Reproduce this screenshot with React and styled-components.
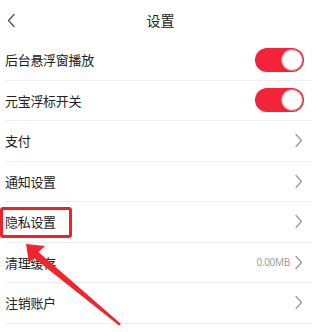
import React from 'react'
import styled, { createGlobalStyle } from 'styled-components'

const Global = createGlobalStyle`
  body {
    margin: 0;
    background: #fff;
    font-family: "Noto Sans CJK SC", "Noto Sans", sans-serif;
  }
`

const rows = [
  { label: '后台悬浮窗播放', type: 'switch' },
  { label: '元宝浮标开关', type: 'switch' },
  { label: '支付' },
  { label: '通知设置' },
  { label: '隐私设置' },
  { label: '清理缓存', value: '0.00MB' },
  { label: '注销账户' },
]

const Chevron = ({ left }) => (
  <svg width="9" height="15" viewBox="0 0 9 15" fill="none">
    {left ? (
      <path d="M7 1.5L1.5 7.5L7 13.5" stroke="#555" strokeWidth="1.4" strokeLinecap="round" strokeLinejoin="round" />
    ) : (
      <path d="M2 1.5L7.5 7.5L2 13.5" stroke="#9a9a9a" strokeWidth="1.3" strokeLinecap="round" strokeLinejoin="round" />
    )}
  </svg>
)

const App = () => {
  return (
    <Page>
      <Global />
      <Header>
        <Back><Chevron left /></Back>
        <Title>设置</Title>
      </Header>
      <List>
        {rows.map(r => (
          <Row key={r.label}>
            <Label>{r.label}</Label>
            <Right>
              {r.type === 'switch' ? (
                <Switch><Knob /></Switch>
              ) : (
                <>
                  {r.value && <Value>{r.value}</Value>}
                  <Chevron />
                </>
              )}
            </Right>
          </Row>
        ))}
      </List>
      <Highlight />
      <Arrow width="319" height="332" viewBox="0 0 319 332">
        <path d="M26 244 L45 246 L38.5 252 L121 324 L119 325.5 L34 258 L29 263 Z" fill="#f0262c" />
      </Arrow>
    </Page>
  )
}

export default App

const Page = styled.div`
  position: relative;
  width: 319px;
  height: 332px;
  overflow: hidden;
  background: #fff;
`

const Header = styled.div`
  position: relative;
  height: 40px;
  display: flex;
  align-items: center;
  justify-content: center;
`

const Back = styled.div`
  position: absolute;
  left: 7px;
  top: 13px;
  display: flex;
`

const Title = styled.div`
  font-size: 14px;
  color: #222;
  margin-left: 2px;
`

const List = styled.div`
  margin: 0 7px 0 5px;
`

const Row = styled.div`
  box-sizing: border-box;
  height: 40.5px;
  display: flex;
  align-items: center;
  justify-content: space-between;
  border-bottom: 1px solid #efefef;
  padding-right: 9px;
`

const Label = styled.div`
  font-size: 13px;
  color: #222;
  letter-spacing: -0.3px;
`

const Right = styled.div`
  display: flex;
  align-items: center;
  gap: 4px;
`

const Value = styled.span`
  font-family: "Noto Sans", sans-serif;
  font-size: 10px;
  color: #a0a0a0;
  letter-spacing: -0.3px;
`

const Switch = styled.div`
  position: relative;
  width: 49px;
  height: 24px;
  border-radius: 12px;
  background: #f3233a;
  margin-right: -1px;
`

const Knob = styled.div`
  position: absolute;
  right: 1px;
  top: 1px;
  width: 22px;
  height: 22px;
  box-sizing: border-box;
  border-radius: 50%;
  background: #fff;
  border: 1px solid #f26b78;
`

const Highlight = styled.div`
  position: absolute;
  left: 0;
  top: 207px;
  width: 72px;
  height: 31px;
  box-sizing: border-box;
  border: 3px solid #ec2429;
  border-radius: 3px;
`

const Arrow = styled.svg`
  position: absolute;
  left: 0;
  top: 0;
  pointer-events: none;
`
